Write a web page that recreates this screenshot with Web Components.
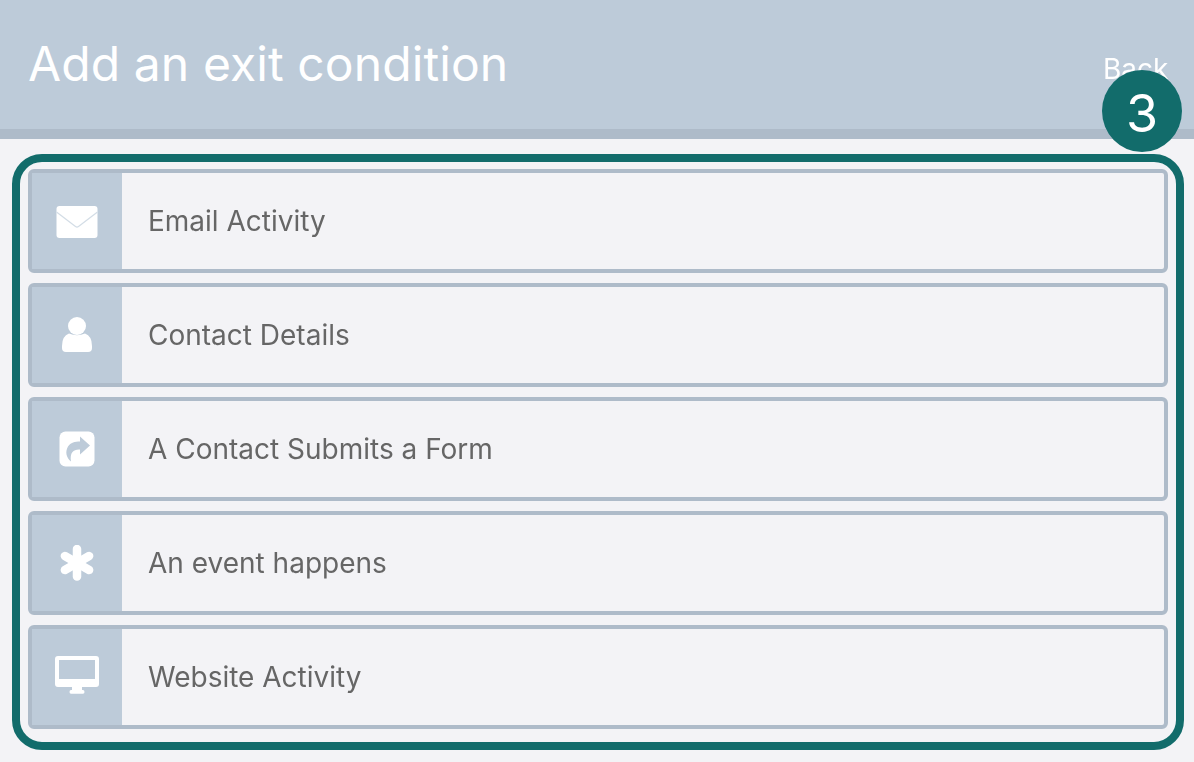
<!DOCTYPE html>
<html>
<head>
<meta charset="utf-8">
<title>Add an exit condition</title>
<style>
  html, body { margin: 0; padding: 0; height: 100%; overflow: hidden; }
  body { background: #f3f3f6; font-family: Inter, "Liberation Sans", sans-serif; }
</style>
</head>
<body>
<page-header title-text="Add an exit condition" back="Back"></page-header>
<highlight-box step="3">
  <condition-item label="Email Activity">
    <svg slot="icon" width="42" height="34" viewBox="0 0 42 34">
      <rect x="0.5" y="2" width="41" height="32" rx="3" fill="#fff"/>
      <path d="M0.5 8 L19.5 22.5 Q21 23.6 22.5 22.5 L41.5 8" fill="none" stroke="#d3dde6" stroke-width="1.2"/>
    </svg>
  </condition-item>
  <condition-item label="Contact Details">
    <svg slot="icon" width="30" height="36" viewBox="0 0 30 36">
      <circle cx="15" cy="9" r="9" fill="#fff"/>
      <path d="M7 16.5 Q15 20 23 16.5 Q30 19 30 29 V31 Q30 35 26 35 H4 Q0 35 0 31 V29 Q0 19 7 16.5 Z" fill="#fff"/>
    </svg>
  </condition-item>
  <condition-item label="A Contact Submits a Form">
    <svg slot="icon" width="36" height="36" viewBox="0 0 36 36">
      <rect x="0.5" y="0.5" width="35" height="35" rx="6" fill="#fff"/>
      <path d="M21 5.5 L31 14.5 L21 23.5 V18.5 C15 18 10.5 21 12 30.5 C7 26.5 6 20.5 9 15.5 C11.5 11.5 16 10.5 21 10.5 Z" fill="#bdcbd9"/>
    </svg>
  </condition-item>
  <condition-item label="An event happens">
    <svg slot="icon" width="34" height="36" viewBox="0 0 34 36">
      <g stroke="#fff" stroke-width="8.5" stroke-linecap="round">
        <path d="M17 4 V31.5"/>
        <path d="M4.9 11 L29.1 25"/>
        <path d="M4.9 25 L29.1 11"/>
      </g>
    </svg>
  </condition-item>
  <condition-item label="Website Activity">
    <svg slot="icon" width="44" height="42" viewBox="0 0 44 42">
      <path fill-rule="evenodd" fill="#fff" d="M3 0 H41 Q44 0 44 3 V28 Q44 31 41 31 H3 Q0 31 0 28 V3 Q0 0 3 0 Z M4 4 V23 H40 V4 Z"/>
      <path fill="#fff" d="M17 31 H27 V34 H28 Q29.5 34 29.5 36 Q29.5 37.7 28 37.7 H16 Q14.5 37.7 14.5 36 Q14.5 34 16 34 H17 Z"/>
    </svg>
  </condition-item>
</highlight-box>

<script>
// Page title bar with the back link
class PageHeader extends HTMLElement {
    constructor() {
        super();
        this.attachShadow({ mode: 'open' });
    }

    connectedCallback() {
        const title = this.getAttribute('title-text') || '';
        const back = this.getAttribute('back') || '';

        this.shadowRoot.innerHTML = `
            <style>
                :host {
                    display: flex;
                    justify-content: space-between;
                    box-sizing: border-box;
                    height: 139px;
                    padding: 0 26px 0 28px;
                    background: #bdcbd9;
                    border-bottom: 10px solid #aebbc9;
                    color: #fff;
                }
                h1 {
                    margin: 36px 0 0;
                    font-size: 48px;
                    line-height: 56px;
                    font-weight: 400;
                    letter-spacing: 0.1px;
                }
                a {
                    margin-top: 53px;
                    font-size: 28px;
                    line-height: 32px;
                    color: inherit;
                    will-change: transform;
                }
            </style>
            <h1>${title}</h1>
            <a>${back}</a>
        `;
    }
}

// Teal outline with the numbered step badge
class HighlightBox extends HTMLElement {
    constructor() {
        super();
        this.attachShadow({ mode: 'open' });
    }

    connectedCallback() {
        const step = this.getAttribute('step') || '';

        this.shadowRoot.innerHTML = `
            <style>
                :host {
                    display: flex;
                    flex-direction: column;
                    gap: 10px;
                    position: relative;
                    box-sizing: border-box;
                    height: 596px;
                    margin: 15px 10px 0 12px;
                    padding: 7px 8px 0;
                    border: 8px solid #126c6b;
                    border-radius: 30px;
                }
                .badge {
                    position: absolute;
                    top: -92px;
                    right: -6px;
                    width: 80px;
                    height: 82px;
                    border-radius: 50%;
                    background: #126c6b;
                    color: #fff;
                    font-size: 52px;
                    line-height: 88px;
                    text-align: center;
                    will-change: transform;
                }
            </style>
            <slot></slot>
            <div class="badge">${step}</div>
        `;
    }
}

// One selectable condition: icon column and a label
class ConditionItem extends HTMLElement {
    constructor() {
        super();
        this.attachShadow({ mode: 'open' });
    }

    connectedCallback() {
        const label = this.getAttribute('label') || '';

        this.shadowRoot.innerHTML = `
            <style>
                :host {
                    display: flex;
                    box-sizing: border-box;
                    height: 104px;
                    border: 4px solid #aebbc9;
                    border-radius: 6px;
                    background: #f3f3f6;
                }
                .icon {
                    display: flex;
                    flex: 0 0 90px;
                    align-items: center;
                    justify-content: center;
                    background: #bdcbd9;
                }
                .label {
                    display: flex;
                    align-items: center;
                    padding-left: 26px;
                    font-size: 28px;
                    color: #666;
                    will-change: transform;
                }
            </style>
            <div class="icon"><slot name="icon"></slot></div>
            <div class="label">${label}</div>
        `;
    }
}

customElements.define('page-header', PageHeader);
customElements.define('highlight-box', HighlightBox);
customElements.define('condition-item', ConditionItem);
</script>
</body>
</html>
